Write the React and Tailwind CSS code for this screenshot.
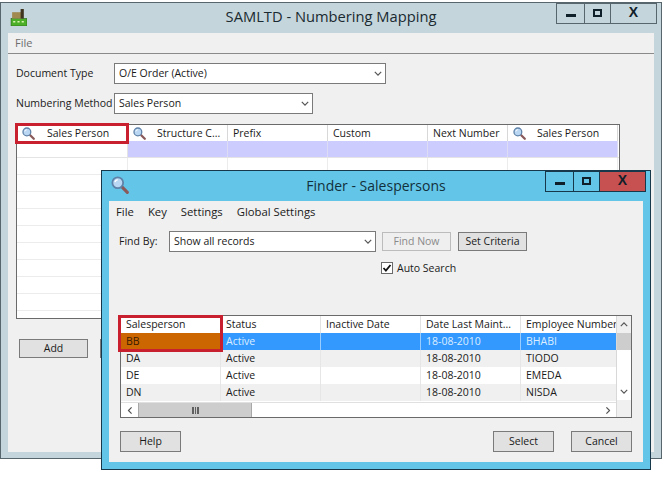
const FONT = "font-['Open_Sans','Noto_Sans',sans-serif]";

function Mag({ className = "" }) {
  return (
    <svg viewBox="0 0 16 16" className={className}>
      <line x1="9.5" y1="9.5" x2="14.5" y2="14.5" stroke="#8a5a5a" strokeWidth="2.8" strokeLinecap="round" />
      <circle cx="6" cy="6" r="4.8" fill="#b9d6f2" stroke="#5f82a8" strokeWidth="1.6" />
      <path d="M3.5 5.5a2.8 2.8 0 0 1 2.4-2.2" fill="none" stroke="#fff" strokeWidth="1.2" />
    </svg>
  );
}

function Chevron({ className = "" }) {
  return (
    <svg viewBox="0 0 10 6" className={`w-[8px] h-[5px] ${className}`}>
      <path d="M1 1l4 4 4-4" fill="none" stroke="#555" strokeWidth="1.5" />
    </svg>
  );
}

function WinControls({ border, close }) {
  return (
    <div className={`absolute top-0 right-[4px] flex h-[21px] border ${border}`}>
      <div className={`w-[28px] flex items-center justify-center border-r ${border}`}>
        <div className="w-[10px] h-[3px] mt-[4px] bg-[#10202a]" />
      </div>
      <div className={`w-[26px] flex items-center justify-center border-r ${border}`}>
        <div className="w-[9px] h-[8px] border-2 border-[#10202a] mb-[2px]" />
      </div>
      <div className={`w-[45px] flex items-center justify-center ${close}`}>
        <span className="text-[14px] leading-none font-bold text-[#10202a] mb-[3px] font-['Liberation_Sans',sans-serif]">X</span>
      </div>
    </div>
  );
}

function Select({ text, className }) {
  return (
    <div className={`flex items-center justify-between bg-white border border-[#7a7a7a] pl-[4px] pr-[3px] text-[10.5px] text-[#1a1a1a] ${className}`}>
      <span className="pt-[1px]">{text}</span>
      <Chevron />
    </div>
  );
}

function Btn({ children, className = "" }) {
  return (
    <div className={`flex items-center justify-center bg-[#e1e1e1] border border-[#7a7a7a] text-[10.5px] text-[#1a1a1a] ${className}`}>
      {children}
    </div>
  );
}

const mainCols = [
  { w: "w-[111px]", mag: true, label: "Sales Person", gap: "ml-[5px] mr-[12px]" },
  { w: "w-[100px]", mag: true, label: "Structure C...", gap: "ml-[5px] mr-[11px]" },
  { w: "w-[100px]", label: "Prefix" },
  { w: "w-[100px]", label: "Custom" },
  { w: "w-[80px]", label: "Next Number" },
  { w: "w-[110px]", mag: true, label: "Sales Person", gap: "ml-[5px] mr-[11px]" },
];

const finderCols = ["w-[100px]", "w-[100px]", "w-[100px]", "w-[100px]", "w-[97px]"];
const finderHead = ["Salesperson", "Status", "Inactive Date", "Date Last Maint...", "Employee Number"];
const finderRows = [
  ["BB", "Active", "", "18-08-2010", "BHABI"],
  ["DA", "Active", "", "18-08-2010", "TIODO"],
  ["DE", "Active", "", "18-08-2010", "EMEDA"],
  ["DN", "Active", "", "18-08-2010", "NISDA"],
];
const rowBg = ["bg-[#3399ff]", "bg-[#f0f0f0]", "bg-white", "bg-[#f0f0f0]"];

function MainWindow() {
  return (
    <div className="w-[662px] h-[457px] mt-[2px] border border-[#56666c] bg-[#c4d5dc] flex flex-col">
      <div className="relative h-[30px] shrink-0 flex items-center justify-center text-[14.7px] text-[#1a2a30]">
        <svg viewBox="0 0 16 16" className="absolute left-[9px] top-[6px] w-[17px] h-[17px]">
          <rect x="1" y="9" width="15" height="7" fill="#4caf28" stroke="#2a6a18" strokeWidth="0.6" />
          <rect x="2" y="3" width="9" height="6" fill="#a08a50" />
          <rect x="10" y="0" width="3" height="9" fill="#40351f" />
          <path d="M3 12h2M7 12h2M11 12h2" stroke="#d8f2b0" strokeWidth="1.4" />
        </svg>
        <span className="mb-[3px]">SAMLTD - Numbering Mapping</span>
        <WinControls border="border-[#56666c]" close="" />
      </div>
      <div className="flex-1 mx-[7px] mb-[6px] bg-[#f0f0f0] flex flex-col">
        <div className="h-[21px] shrink-0 border-b border-[#8a8a8a] px-[7px] flex items-center text-[11px] text-[#6d6d6d]">File</div>
        <div className="pl-[8px] pt-[9px] flex flex-col">
          <div className="flex items-center h-[21px]">
            <span className="w-[98px] pt-[1px] text-[10.5px] text-[#1a1a1a]">Document Type</span>
            <Select text="O/E Order (Active)" className="w-[272px] h-[21px]" />
          </div>
          <div className="flex items-center h-[21px] mt-[9px]">
            <span className="w-[98px] pt-[1px] text-[10.5px] text-[#1a1a1a] whitespace-nowrap">Numbering Method</span>
            <Select text="Sales Person" className="w-[199px] h-[21px]" />
          </div>
          <div className="relative w-[604px] h-[195px] mt-[10px] border border-[#6a6a6a] bg-white flex flex-col overflow-visible">
            <div className="absolute -left-[2px] -top-[2px] w-[114px] h-[21px] border-[3px] border-[#c8202f]" />
            <div className="h-[16px] shrink-0 flex">
              {mainCols.map((c, i) => (
                <div key={i} className={`${c.w} shrink-0 flex items-center border-r border-[#d8d8d8] text-[10.5px] text-[#1a1a1a] ${c.mag ? "" : "pl-[5px]"}`}>
                  {c.mag && <Mag className={`w-[13px] h-[13px] shrink-0 ${c.gap}`} />}
                  <span className="whitespace-nowrap pt-[1px]">{c.label}</span>
                </div>
              ))}
            </div>
            <div className="h-[17px] shrink-0 flex border-b border-[#e4e4e4]">
              <div className="w-[111px] shrink-0 border-r border-[#e4e4e4]" />
              <div className="w-[490px] shrink-0 flex bg-[#ccccff]">
                {mainCols.slice(1).map((c, i) => (
                  <div key={i} className={`${c.w} shrink-0 border-r border-[#dcdcf5]`} />
                ))}
              </div>
            </div>
            {Array.from({ length: 9 }).map((_, r) => (
              <div key={r} className="h-[17px] shrink-0 flex border-b border-[#ececec]">
                {mainCols.map((c, i) => (
                  <div key={i} className={`${c.w} shrink-0 border-r border-[#ececec]`} />
                ))}
              </div>
            ))}
          </div>
          <div className="flex gap-[12px] ml-[3px] mt-[20px]">
            <Btn className="w-[69px] h-[19px] pt-[1px]">Add</Btn>
            <Btn className="w-[69px] h-[19px]" />
          </div>
        </div>
      </div>
    </div>
  );
}

function FinderTable() {
  return (
    <div className="relative w-[512px] h-[103px] ml-[11px] mt-[40px] border border-[#6a6a6a] bg-white flex">
      <div className="flex-1 flex flex-col min-w-0">
        <div className="h-[17px] flex shrink-0">
          {finderHead.map((h, i) => (
            <div key={i} className={`${finderCols[i]} shrink-0 pl-[5px] flex items-center border-r border-[#e2e2e2] text-[10.5px] text-[#1a1a1a] whitespace-nowrap`}>{h}</div>
          ))}
        </div>
        {finderRows.map((row, r) => (
          <div key={r} className={`h-[17px] flex shrink-0 ${rowBg[r]}`}>
            {row.map((v, i) => (
              <div
                key={i}
                className={`${finderCols[i]} shrink-0 pl-[5px] flex items-center border-r text-[10.5px] whitespace-nowrap ${
                  r === 0
                    ? i === 0
                      ? "bg-[#cc6600] text-[#3a1c00] border-[#cc6600]"
                      : "text-[#dcedff] border-[#ffffff80]"
                    : "text-[#1a1a1a] border-[#e6e6e6]"
                }`}
              >
                {v}
              </div>
            ))}
          </div>
        ))}
        <div className="mt-auto h-[15px] flex items-stretch border-t border-[#e0e0e0]">
          <div className="w-[17px] flex items-center justify-center">
            <Chevron className="rotate-90" />
          </div>
          <div className="w-[114px] bg-[#cdcdcd] border-x border-[#a8a8a8] flex items-center justify-center">
            <div className="w-[7px] h-[7px] border-x-2 border-[#606060] flex justify-center"><div className="w-[1px] h-full bg-[#606060]" /></div>
          </div>
          <div className="flex-1" />
          <div className="w-[17px] flex items-center justify-center">
            <Chevron className="-rotate-90" />
          </div>
        </div>
      </div>
      <div className="w-[15px] shrink-0 flex flex-col bg-[#f0f0f0] border-l border-[#d8d8d8]">
        <div className="h-[17px] flex items-center justify-center"><Chevron className="rotate-180" /></div>
        <div className="h-[17px] bg-[#cdcdcd]" />
        <div className="flex-1 bg-white" />
        <div className="h-[17px] flex items-center justify-center bg-white"><Chevron /></div>
        <div className="h-[17px] bg-[#f0f0f0]" />
      </div>
      <div className="absolute -left-[3px] -top-[1px] w-[105px] h-[37px] border-[3px] border-[#c8202f]" />
    </div>
  );
}

function FinderWindow() {
  return (
    <div className="absolute left-[101px] top-[170px] w-[550px] h-[300px] border border-[#17384a] bg-[#63c6e8] flex flex-col">
      <div className="relative h-[30px] shrink-0 flex items-center justify-center text-[14px] text-[#12303c]">
        <Mag className="absolute left-[9px] top-[5px] w-[18px] h-[18px]" />
        <span className="mb-[1px]">Finder - Salespersons</span>
        <WinControls border="border-[#17384a]" close="bg-[#c75050]" />
      </div>
      <div className="flex-1 mx-[7px] mb-[7px] bg-[#f0f0f0] flex flex-col">
        <div className="flex gap-[14px] h-[21px] mt-[1px] pl-[7px] items-center text-[11.3px] text-[#1a1a1a]">
          <span>File</span><span>Key</span><span>Settings</span><span>Global Settings</span>
        </div>
        <div className="flex items-center h-[21px] mt-[8px] pl-[10px]">
          <span className="w-[50px] pt-[1px] text-[10.5px] text-[#1a1a1a]">Find By:</span>
          <Select text="Show all records" className="w-[207px] h-[21px]" />
          <div className="ml-[6px] w-[69px] h-[19px] pt-[1px] flex items-center justify-center bg-[#efefef] border border-[#bcbcbc] text-[10.5px] text-[#8a8a8a]">Find Now</div>
          <Btn className="ml-[7px] w-[69px] h-[19px] pt-[1px]">Set Criteria</Btn>
        </div>
        <div className="flex items-center h-[14px] mt-[9px] ml-[272px]">
          <div className="w-[12px] h-[12px] bg-white border border-[#6a6a6a] flex items-center justify-center">
            <svg viewBox="0 0 10 10" className="w-[10px] h-[10px]"><path d="M1.5 5l2.4 2.6L8.5 2" fill="none" stroke="#111" strokeWidth="1.8" /></svg>
          </div>
          <span className="ml-[4px] pt-[1px] text-[10.5px] text-[#1a1a1a]">Auto Search</span>
        </div>
        <FinderTable />
        <div className="flex items-center ml-[11px] mr-[11px] mt-[13px]">
          <Btn className="w-[61px] h-[21px]">Help</Btn>
          <Btn className="ml-auto w-[61px] h-[21px] border-[#3f6f90]">Select</Btn>
          <Btn className="ml-[17px] w-[61px] h-[21px]">Cancel</Btn>
        </div>
      </div>
    </div>
  );
}

export default function App() {
  return (
    <div className={`relative w-[665px] h-[485px] overflow-hidden bg-white ${FONT}`}>
      <MainWindow />
      <FinderWindow />
    </div>
  );
}
